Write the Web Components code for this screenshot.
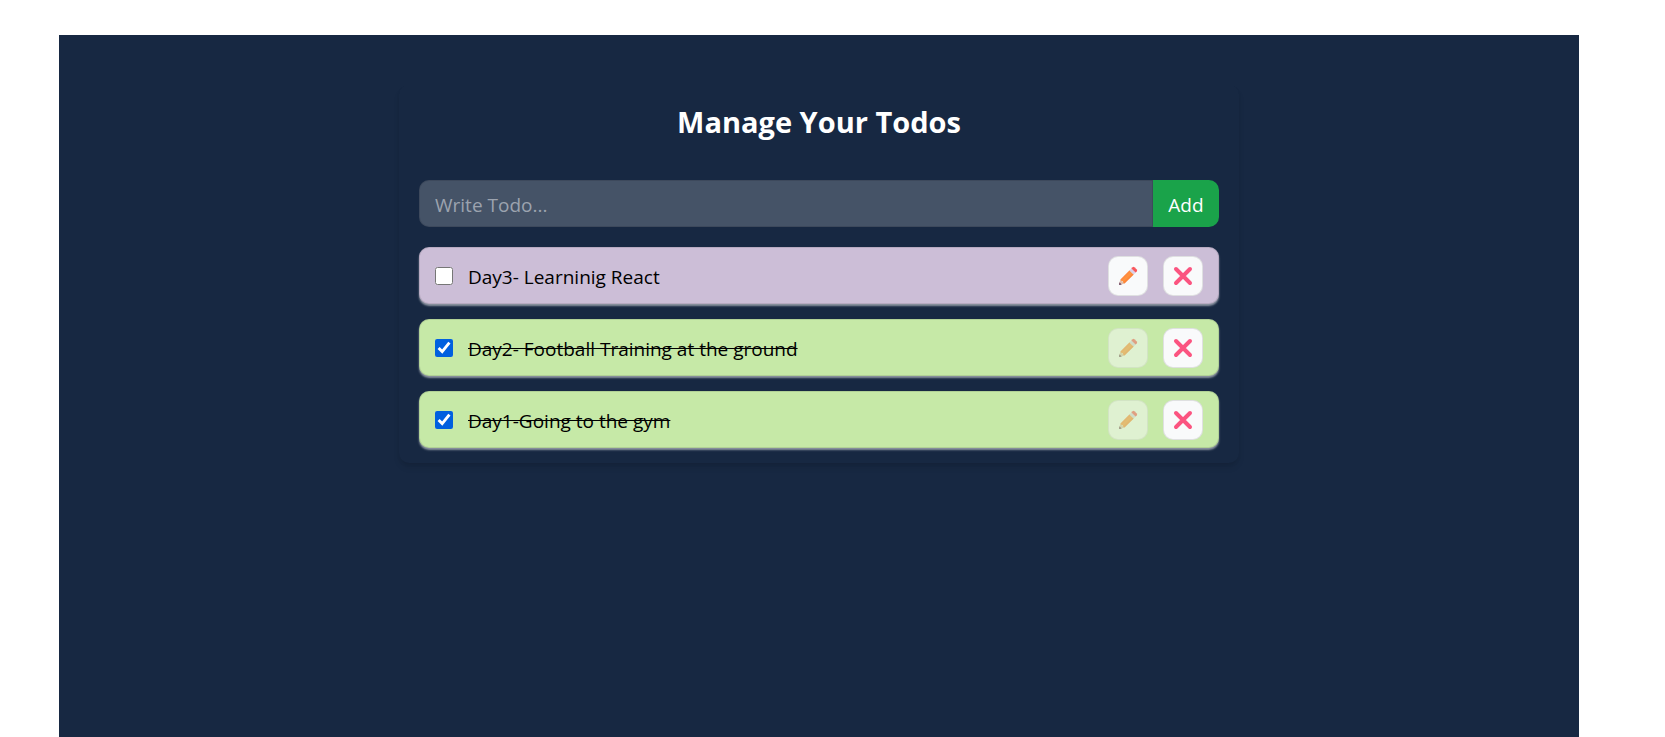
<!DOCTYPE html>
<html lang="en">
<head>
<meta charset="utf-8">
<title>Manage Your Todos</title>
<style>
  html, body { margin: 0; height: 100%; background: #fff; }
  body { font-family: "Segoe UI", "Open Sans", "Noto Sans", sans-serif; font-size: 19px; line-height: 30px; color: #000; }
</style>
</head>
<body>
<todo-app>
  <todo-form></todo-form>
  <todo-item label="Day3- Learninig React"></todo-item>
  <todo-item label="Day2- Football Training at the ground" done></todo-item>
  <todo-item label="Day1-Going to the gym" done></todo-item>
</todo-app>

<script>
class TodoApp extends HTMLElement {
  constructor() {
    super();
    this.attachShadow({ mode: 'open' }).innerHTML = `
      <style>
        :host { display: flex; flex-direction: column; box-sizing: border-box; min-height: 100%; padding: 35px 86px 0 59px; }
        main { flex: 1; padding: 50px 20px; background: #172842; }
        section { box-sizing: border-box; max-width: 840px; margin: 0 auto; padding: 15px 20px; border-radius: 10px;
          box-shadow: 0 5px 7px -1px rgba(0,0,0,.1), 0 2px 5px -2px rgba(0,0,0,.1); }
        h1 { margin: 0; padding: 2px 0 38px; font-size: 29px; line-height: 40px; font-weight: 700; text-align: center; color: #fff; }
        .list { display: flex; flex-direction: column; gap: 15px; }
        ::slotted(todo-form) { margin-bottom: 5px; }
      </style>
      <main><section><h1>Manage Your Todos</h1><div class="list"><slot></slot></div></section></main>`;
  }
}

class TodoForm extends HTMLElement {
  constructor() {
    super();
    this.attachShadow({ mode: 'open' }).innerHTML = `
      <style>
        :host { display: block; }
        form { display: flex; height: 47px; margin: 0; }
        input { flex: 1; min-width: 0; box-sizing: border-box; padding: 2px 15px 0; border: 1px solid rgba(0,0,0,.1);
          border-radius: 10px 0 0 10px; background: rgba(255,255,255,.2); font: inherit; color: #fff; outline: 0; }
        input::placeholder { color: #9ca3af; opacity: 1; }
        button { box-sizing: border-box; width: 66px; padding: 2px 0 0; border: 0; border-radius: 0 10px 10px 0; background: #1aa34a; color: #fff; font: inherit; }
      </style>
      <form><input type="text" placeholder="Write Todo..." aria-label="Write Todo"><button type="submit">Add</button></form>`;
    this.shadowRoot.querySelector('form').addEventListener('submit', e => e.preventDefault());
  }
}

class TodoItem extends HTMLElement {
  constructor() {
    super();
    this.attachShadow({ mode: 'open' }).innerHTML = `
      <style>
        :host { display: flex; align-items: center; gap: 15px; box-sizing: border-box; min-height: 57px; padding: 0 15px;
          border: 1px solid rgba(0,0,0,.1); border-radius: 10px; background: #ccbed7; box-shadow: 0 2px 2px rgba(255,255,255,.5); }
        :host([done]) { background: #c6e9a7; }
        input { width: 18px; height: 18px; margin: 0; flex: none; accent-color: #0060df; }
        label { flex: 1; min-width: 0; padding-top: 2px; }
        :host([done]) label { text-decoration: line-through; }
        button { display: flex; align-items: center; justify-content: center; flex: none; box-sizing: border-box; width: 40px; height: 40px; padding: 0;
          border: 1px solid rgba(0,0,0,.1); border-radius: 10px; background: #f9fafb; }
        button:disabled { opacity: .5; }
        svg { display: block; width: 20px; height: 20px; }
      </style>
      <input type="checkbox" id="done"><label for="done"></label>
      <button class="edit" type="button" aria-label="Edit">
        <svg viewBox="0 0 20 20">
          <defs><linearGradient id="g" x1="0" y1="0" x2="1" y2="1"><stop offset="0" stop-color="#ff6238"/><stop offset=".5" stop-color="#ff9440"/><stop offset="1" stop-color="#f4511e"/></linearGradient></defs>
          <path d="M2.4 13.4 6.6 17.6 2 19Q.8 19.2 1 18Z" fill="#dfc0ae"/>
          <path d="M1.5 16.3 3.7 18.5 2 19Q.8 19.2 1 18Z" fill="#76506b"/>
          <path d="M2.4 13.4 11.6 4.2 15.8 8.4 6.6 17.6Q5 17.4 4.8 15.2 2.6 15 2.4 13.4Z" fill="url(#g)"/>
          <path d="M11.4 4.4 13.6 2.2 17.8 6.4 15.6 8.6Z" fill="#d9d0e9"/>
          <path d="M13.4 2.4 14.6 1.2Q15.5.5 16.4 1.2L18.8 3.6Q19.5 4.5 18.8 5.4L17.6 6.6Z" fill="#f9575d"/>
        </svg>
      </button>
      <button class="delete" type="button" aria-label="Delete">
        <svg viewBox="0 0 20 20"><path d="M3 3 17 17M17 3 3 17" stroke="#fb5480" stroke-width="4" stroke-linecap="round"/></svg>
      </button>`;
  }
  connectedCallback() {
    const root = this.shadowRoot;
    const box = root.querySelector('input');
    const edit = root.querySelector('.edit');
    root.querySelector('label').textContent = this.getAttribute('label');
    box.checked = edit.disabled = this.hasAttribute('done');
    box.addEventListener('change', () => {
      this.toggleAttribute('done', box.checked);
      edit.disabled = box.checked;
    });
    root.querySelector('.delete').addEventListener('click', () => this.remove());
  }
}

customElements.define('todo-app', TodoApp);
customElements.define('todo-form', TodoForm);
customElements.define('todo-item', TodoItem);
</script>
</body>
</html>
